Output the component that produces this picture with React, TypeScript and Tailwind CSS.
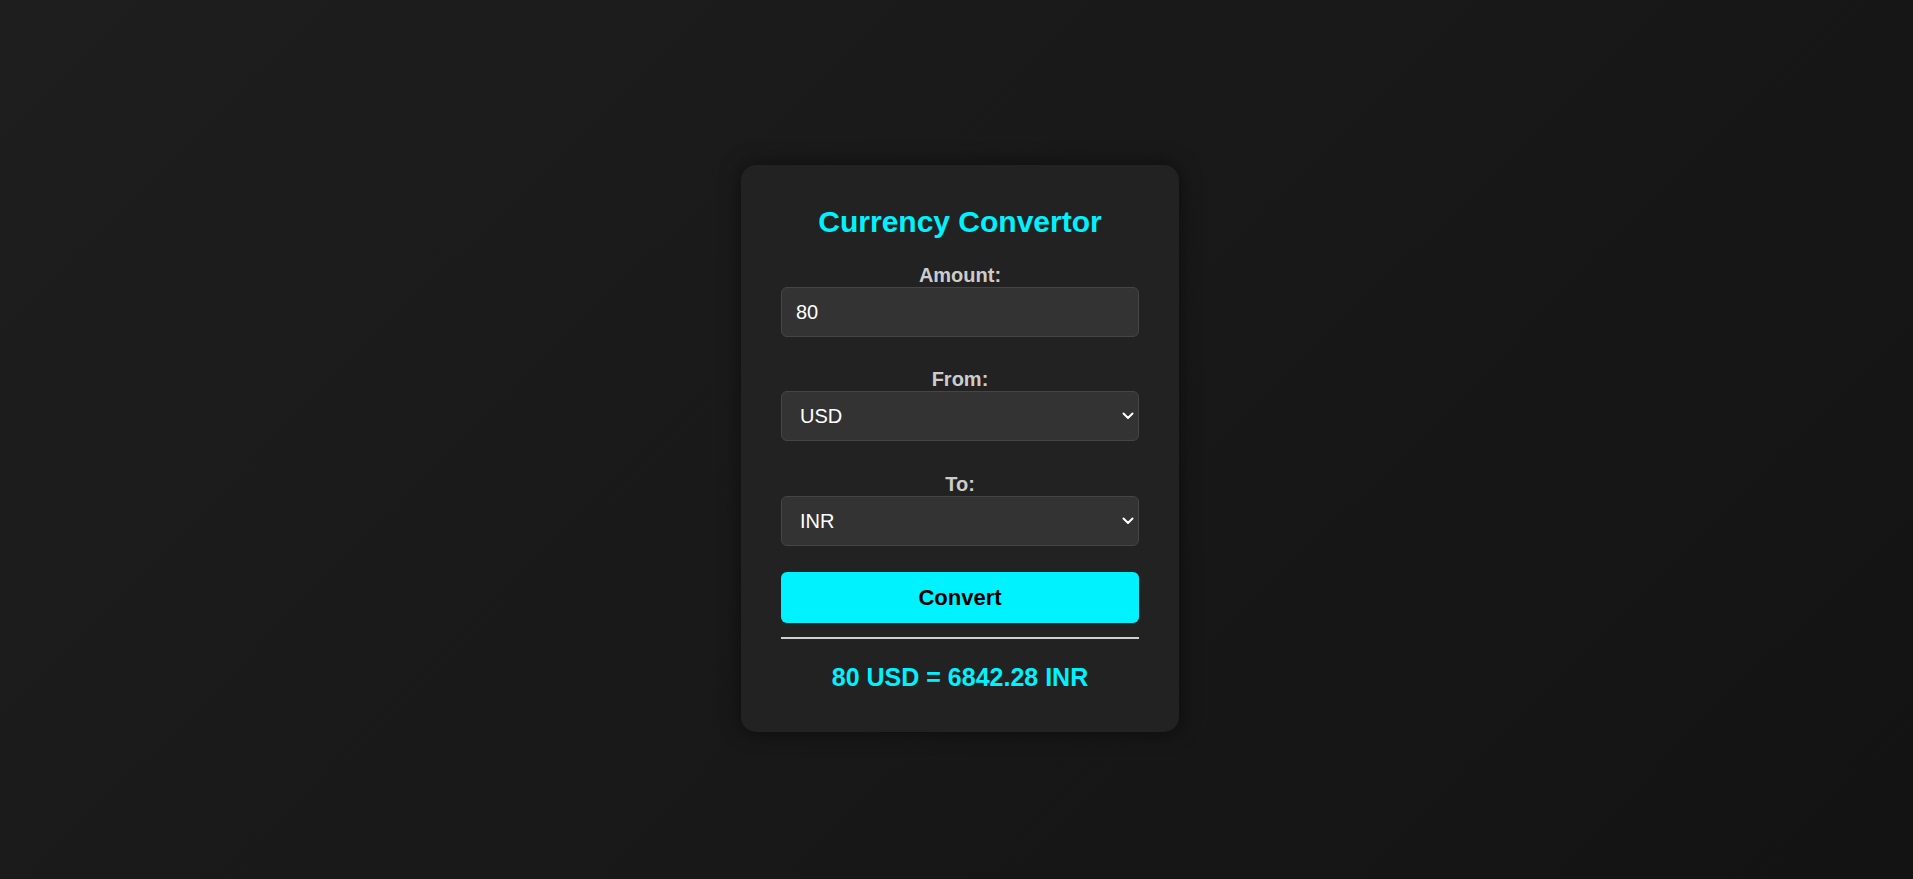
import { useState } from 'react';

const rates: Record<string, number> = { USD: 1, INR: 85.5285, EUR: 0.92, GBP: 0.79, JPY: 151.2 };

function Chevron() {
  return (
    <svg className="pointer-events-none absolute right-[5px] top-1/2 -translate-y-1/2" width="12" height="8" viewBox="0 0 12 8" fill="none">
      <path d="M1.5 1.5 L6 6 L10.5 1.5" stroke="#ffffff" strokeWidth="2" strokeLinecap="round" strokeLinejoin="round" />
    </svg>
  );
}

export default function App() {
  const [amount, setAmount] = useState('80');
  const [from, setFrom] = useState('USD');
  const [to, setTo] = useState('INR');
  const [result, setResult] = useState('80 USD = 6842.28 INR');

  const convert = () => {
    const v = parseFloat(amount) || 0;
    const out = (v / rates[from]) * rates[to];
    setResult(`${amount} ${from} = ${out.toFixed(2)} ${to}`);
  };

  const field = 'w-full h-[50px] rounded-[6px] border border-[#454545] bg-[#333333] text-white text-[20px] outline-none';

  return (
    <main className="flex h-screen items-start justify-center bg-[linear-gradient(135deg,#1e1e1e,#131313)] pt-[165px] pl-[7px] font-['Liberation_Sans',Arial,sans-serif]">
      <div className="flex w-[438px] flex-col items-center rounded-[15px] bg-[#222222] p-[40px] shadow-[0_0_20px_rgba(0,0,0,0.5)]">
        <h2 className="mb-[25px] text-[30px] leading-[34px] font-bold text-[#00f2ff]">Currency Convertor</h2>

        <label className="text-[20px] leading-[23px] font-bold text-[#cccccc]">Amount:</label>
        <input className={`${field} mb-[31px] px-[14px]`} value={amount} onChange={e => setAmount(e.target.value)} />

        <label className="text-[20px] leading-[23px] font-bold text-[#cccccc]">From:</label>
        <div className="relative mb-[32px] w-full">
          <select className={`${field} appearance-none pl-[18px]`} value={from} onChange={e => setFrom(e.target.value)}>
            {Object.keys(rates).map(c => <option key={c}>{c}</option>)}
          </select>
          <Chevron />
        </div>

        <label className="text-[20px] leading-[23px] font-bold text-[#cccccc]">To:</label>
        <div className="relative w-full">
          <select className={`${field} appearance-none pl-[18px]`} value={to} onChange={e => setTo(e.target.value)}>
            {Object.keys(rates).map(c => <option key={c}>{c}</option>)}
          </select>
          <Chevron />
        </div>

        <button onClick={convert} className="mt-[26px] h-[51px] w-full rounded-[6px] bg-[#00f2ff] text-[22px] font-bold text-black">Convert</button>

        <div className="mt-[14px] h-[2px] w-full bg-[#d0d0d0]" />

        <p className="mt-[24px] text-[25px] leading-[29px] font-bold text-[#00f2ff]">{result}</p>
      </div>
    </main>
  );
}
